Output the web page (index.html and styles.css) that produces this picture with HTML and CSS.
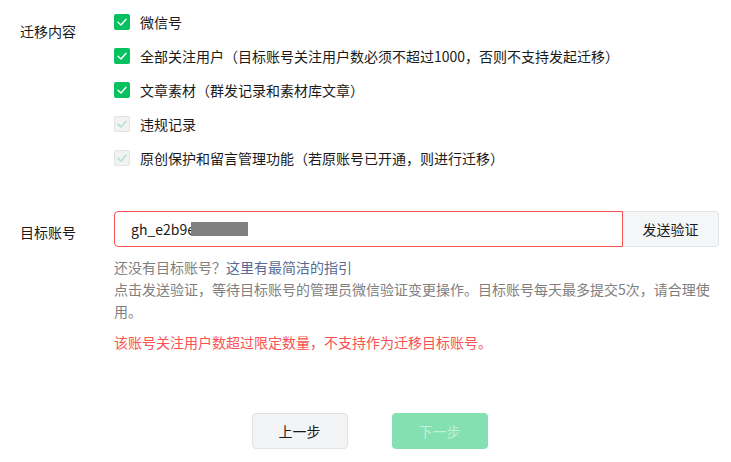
FILE: index.html
```html
<!DOCTYPE html>
<html lang="zh-CN">
<head>
  <meta charset="UTF-8" />
  <meta name="viewport" content="width=device-width, initial-scale=1.0" />
  <title>账号迁移</title>
  <link rel="stylesheet" href="styles.css">
</head>
<body>
  <div class="page">
    <div class="form-row row-content">
      <div class="form-label label-content">迁移内容</div>
      <div class="form-control">
        <ul class="checklist">
          <li class="check-item">
            <span class="checkbox checked"><svg viewBox="0 0 16 16"><polyline points="4,8.2 7,11 12,5.2" /></svg></span>
            <span>微信号</span>
          </li>
          <li class="check-item">
            <span class="checkbox checked"><svg viewBox="0 0 16 16"><polyline points="4,8.2 7,11 12,5.2" /></svg></span>
            <span>全部关注用户（目标账号关注用户数必须不超过1000，否则不支持发起迁移）</span>
          </li>
          <li class="check-item">
            <span class="checkbox checked"><svg viewBox="0 0 16 16"><polyline points="4,8.2 7,11 12,5.2" /></svg></span>
            <span>文章素材（群发记录和素材库文章）</span>
          </li>
          <li class="check-item">
            <span class="checkbox disabled"><svg viewBox="0 0 16 16"><polyline points="4,8.2 7,11 12,5.2" /></svg></span>
            <span>违规记录</span>
          </li>
          <li class="check-item">
            <span class="checkbox disabled"><svg viewBox="0 0 16 16"><polyline points="4,8.2 7,11 12,5.2" /></svg></span>
            <span>原创保护和留言管理功能（若原账号已开通，则进行迁移）</span>
          </li>
        </ul>
      </div>
    </div>

    <div class="form-row row-target">
      <div class="form-label label-target">目标账号</div>
      <div class="form-control">
        <div class="input-group">
          <div class="input-box">gh_e2b9e<span class="mask"></span></div>
          <button class="btn-send">发送验证</button>
        </div>
        <div class="help">
          <p>还没有目标账号？<a href="#">这里有最简洁的指引</a></p>
          <p>点击发送验证，等待目标账号的管理员微信验证变更操作。目标账号每天最多提交5次，请合理使用。</p>
        </div>
        <p class="error">该账号关注用户数超过限定数量，不支持作为迁移目标账号。</p>
      </div>
    </div>

    <div class="actions">
      <button class="btn btn-prev">上一步</button>
      <button class="btn btn-next" disabled>下一步</button>
    </div>
  </div>
</body>
</html>
```

FILE: styles.css
```css
body {
  margin: 0;
  font-family: "Noto Sans CJK SC", sans-serif;
  font-size: 14px;
  color: #1a1a1a;
  background: #fff;
}

.page {
  padding: 0 12px 0 20px;
}

.form-row {
  display: flex;
}

.form-label {
  width: 94px;
  flex-shrink: 0;
  line-height: 20px;
}

.form-control {
  flex: 1;
}

.row-content {
  margin-top: 12px;
}

.label-content {
  padding-top: 9px;
}

.checklist {
  list-style: none;
  margin: 0;
  padding: 0;
  display: flex;
  flex-direction: column;
  gap: 14px;
}

.check-item {
  display: flex;
  align-items: center;
  gap: 10px;
  height: 20px;
  line-height: 20px;
}

.checkbox {
  width: 16px;
  height: 16px;
  box-sizing: border-box;
  border-radius: 2px;
  display: flex;
}

.checkbox svg {
  width: 16px;
  height: 16px;
  fill: none;
  stroke-width: 1.4;
  stroke-linecap: round;
  stroke-linejoin: round;
}

.checkbox.checked {
  background: #07c160;
}

.checkbox.checked svg {
  stroke: #fff;
}

.checkbox.disabled {
  background: #f2f2f2;
  border: 1px solid #e4e4e4;
}

.checkbox.disabled svg {
  margin: -1px;
  stroke: #a6e3c4;
}

.row-target {
  margin-top: 43px;
}

.label-target {
  line-height: 36px;
  padding-top: 3px;
}

.input-group {
  display: flex;
  height: 36px;
}

.input-box {
  flex: 1;
  box-sizing: border-box;
  border: 1px solid #fa5151;
  border-radius: 4px 0 0 4px;
  padding: 0 16px;
  line-height: 34px;
  display: flex;
  align-items: center;
  color: #1a1a1a;
}

.mask {
  display: inline-block;
  width: 57px;
  height: 14px;
  margin-left: -4px;
  background: #808080;
}

.btn-send {
  width: 96px;
  box-sizing: border-box;
  border: 1px solid #e3e4e6;
  border-left: none;
  border-radius: 0 4px 4px 0;
  background: #f5f6f7;
  font-family: inherit;
  font-size: 14px;
  color: #1a1a1a;
  padding: 0;
}

.help {
  margin-top: 9px;
  color: #808080;
  line-height: 22px;
}

.help p {
  margin: 0;
}

.help a {
  color: #576b95;
  text-decoration: none;
}

.error {
  margin: 9px 0 0;
  line-height: 22px;
  color: #fa5151;
}

.actions {
  display: flex;
  justify-content: center;
  gap: 44px;
  margin-top: 60px;
}

.btn {
  width: 96px;
  height: 36px;
  box-sizing: border-box;
  border-radius: 4px;
  font-family: inherit;
  font-size: 14px;
  padding: 0;
}

.btn-prev {
  background: #f3f4f6;
  border: 1px solid #e0e2e5;
  color: #1a1a1a;
}

.btn-next {
  background: #84e0b0;
  border: none;
  color: #c2f0d9;
}
```
